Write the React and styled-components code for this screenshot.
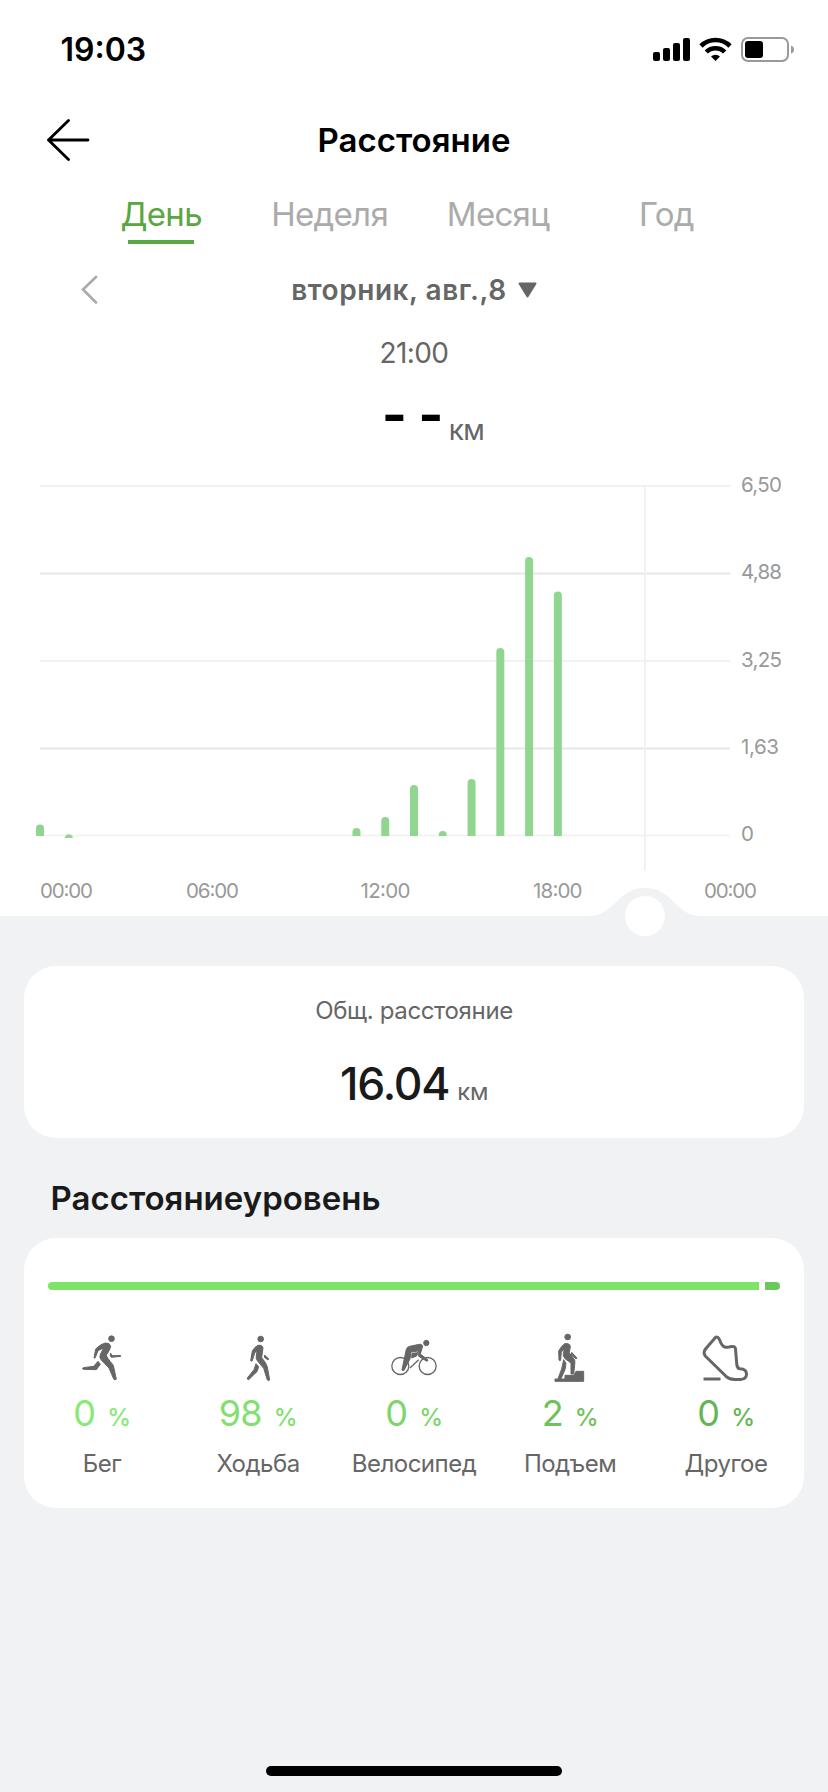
import React from "react";
import styled, { createGlobalStyle } from "styled-components";

const Global = createGlobalStyle`
  * { box-sizing: border-box; }
  body { margin: 0; background: #f0f2f4; font-family: Inter, "Liberation Sans", sans-serif; }
`;

const Screen = styled.main`
  width: 828px;
  height: 1792px;
  display: flex;
  flex-direction: column;
  background: #f0f2f4;
  overflow: hidden;
`;

const Top = styled.section`
  height: 916px;
  flex: none;
  display: flex;
  flex-direction: column;
  background: #fff;
  > * { flex-shrink: 0; }
`;

const Text = styled.span`
  font-size: ${(p) => p.$size}px;
  line-height: ${(p) => p.$lh || 40}px;
  font-weight: ${(p) => p.$weight || 400};
  color: ${(p) => p.$color || "#666"};
  letter-spacing: ${(p) => p.$ls || 0}px;
  white-space: pre;
`;

const Dashes = styled(Text)`
  padding-bottom: 5px;
  word-spacing: -1.5px;
`;

const StatusBar = styled.div`
  height: 100px;
  padding: 30px 34px 0 60.5px;
  display: flex;
  justify-content: space-between;
  align-items: flex-start;
`;

const StatusIconsWrap = styled.div`
  padding-top: 6px;
  display: flex;
`;

const TitleBar = styled.header`
  height: 80px;
  padding: 0 47px;
  display: grid;
  grid-template-columns: 44px 1fr 44px;
  align-items: center;
  justify-items: center;
`;

const Tabs = styled.nav`
  height: 70px;
  padding: 0 77px;
  display: grid;
  grid-template-columns: repeat(4, 168.4px);
`;

const Tab = styled.div`
  padding-top: 14px;
  display: flex;
  flex-direction: column;
  align-items: center;
  gap: 6px;
`;

const Underline = styled.div`
  width: 66px;
  height: 4px;
  background: #5aa641;
`;

const DateRow = styled.div`
  height: 80px;
  padding: 0 81px;
  display: grid;
  grid-template-columns: 17px 1fr 17px;
  align-items: center;
`;

const DateLabel = styled.div`
  display: flex;
  justify-content: center;
  align-items: center;
  gap: 11px;
`;

const Reading = styled.div`
  height: 130px;
  display: flex;
  flex-direction: column;
  align-items: center;
`;

const Value = styled.div`
  display: flex;
  align-items: baseline;
  justify-content: center;
  gap: ${(p) => p.$gap}px;
`;

const ReadingValue = styled(Value)`
  height: 74px;
  align-items: flex-end;
  padding-left: 38px;
`;

const ChartSvg = styled.svg`
  display: block;
  margin-bottom: -20px;
  text { font-family: Inter, "Liberation Sans", sans-serif; font-size: 20.5px; fill: #999; }
`;

const Body = styled.section`
  flex: 1;
  padding: 50px 24px 16px;
  display: flex;
  flex-direction: column;
`;

const Card = styled.div`
  height: ${(p) => p.$h}px;
  flex: none;
  border-radius: 32px;
  background: #fff;
  display: flex;
  flex-direction: column;
  align-items: center;
`;

const TotalCard = styled(Card)`
  padding-top: 25px;
  gap: 23px;
`;

const LevelCard = styled(Card)`
  padding-top: 44px;
`;

const Heading = styled.h2`
  margin: 0;
  height: 100px;
  padding: 40px 0 0 26.5px;
  display: flex;
`;

const Progress = styled.div`
  width: 732px;
  height: 8px;
  display: flex;
  gap: 6px;
  border-radius: 4px;
  overflow: hidden;
`;

const Segment = styled.div`
  flex: ${(p) => p.$share};
  background: ${(p) => p.$color};
`;

const Activities = styled.div`
  width: 780px;
  margin-top: 43px;
  display: grid;
  grid-template-columns: repeat(5, 156px);
`;

const Activity = styled.div`
  display: flex;
  flex-direction: column;
  align-items: center;
`;

const Home = styled.div`
  width: 296px;
  height: 10px;
  flex: none;
  margin: auto auto 0;
  border-radius: 5px;
  background: #000;
`;

const GRID = [
  ["6,50", 486, 41, "#f0f1f2"],
  ["4,88", 573.5, 41, "#e6e7e8"],
  ["3,25", 661, 41, "#f0f1f2"],
  ["1,63", 748.5, 38, "#e6e7e8"],
  ["0", 835.5, 11, "#f2f3f4"],
];
const HOURS = [
  ["00:00", 40, 53],
  ["06:00", 186, 53],
  ["12:00", 360.5, 50],
  ["18:00", 533, 49.5],
  ["00:00", 704, 53],
];
const BARS = [
  [0, 824.5], [11, 828], [12, 817], [13, 785], [14, 831],
  [15, 779], [16, 648], [17, 557], [18, 591.5],
];

function Chart() {
  return (
    <ChartSvg width="828" height="476" viewBox="0 460 828 476">
      {GRID.map(([label, y, w, c]) => (
        <g key={label}>
          <line x1="40" x2="730" y1={y} y2={y} stroke={c} strokeWidth="2" />
          <text x="741" y={y + 5.5} textLength={w}>{label}</text>
        </g>
      ))}
      <line x1="645" x2="645" y1="486" y2="871" stroke="#eff1f2" strokeWidth="2" />
      {BARS.map(([h, y]) => {
        const x = 40 + h * 28.77 - 4;
        return (
          <path key={h} d={`M${x} 836V${y + 4}a4 4 0 0 1 8 0V836z`} fill="#90d690" />
        );
      })}
      <path d="M64.8 838c0-5 8-5 8 0z" fill="#90d690" />
      {HOURS.map(([t, x, w]) => (
        <text key={x} x={x} y="898" textLength={w}>{t}</text>
      ))}
      <path
        d="M0 916H588C616 916 616 888 645 888S674 916 702 916H828V936H0z"
        fill="#f0f2f4"
      />
      <circle cx="645" cy="916" r="20" fill="#fff" />
    </ChartSvg>
  );
}

function StatusIcons() {
  return (
    <svg width="142" height="26" viewBox="652 36 142 26">
      <rect x="653" y="52" width="7" height="9" rx="2" />
      <rect x="663" y="48" width="7" height="13" rx="2" />
      <rect x="673" y="43" width="7" height="18" rx="2" />
      <rect x="683" y="38" width="7" height="23" rx="2" />
      <g fill="none" stroke="#000" strokeWidth="4.6">
        <path d="M701 46a20.5 20.5 0 0 1 29 0" />
        <path d="M706.3 52a13 13 0 0 1 18.4 0" />
      </g>
      <path d="M711 56.5a7 7 0 0 1 9 0L715.500 61z" />
      <rect x="742" y="38" width="46" height="23" rx="6" fill="#fff" stroke="#999" strokeWidth="2" />
      <rect x="745" y="41" width="18" height="17" rx="3" />
      <path d="M791 45.500q3 1 3 4t-3 4z" fill="#999" />
    </svg>
  );
}

const solid = { fill: "#666", stroke: "#666", strokeWidth: 3, strokeLinejoin: "round" };

const ICONS = {
  run: (
    <g transform="translate(70 1325) scale(.33333)" {...solid}>
      <circle cx="124.500" cy="41" r="8.500" />
      <path d="M72 98L77 72Q92 57 106 54Q120 53 122 64Q121 74 109 90Q110 97 130 121L139 163Q135 166 131 162L117 129L93 104Q87 97 91 88L101 69L84 77L76 98Q74 101 72 98z" />
      <path d="M122 85L127 92L152 91.500L152 94L124 97Q118 93 122 85z" />
      <path d="M84 109L91 118L79 134L40 133Q35 131 40 128L71 124z" />
    </g>
  ),
  walk: (
    <g transform="translate(60 1320) scale(.33333)" {...solid}>
      <circle cx="602" cy="57" r="8.500" />
      <path d="M572 122L577 93Q585 79 594 76Q608 74 609 84L605 113Q619 129 622 141L629 180Q626 184 622 180L611 145L592 122Q587 116 589 108L591 92L584 99L577 122Q574 125 572 122z" />
      <path d="M614 105L626 117L624 120L613 112z" />
      <path d="M588 131L596 140L591 155L566 179Q561 179 562 174L582 149z" />
    </g>
  ),
  bike: (
    <g transform="translate(330 1320) scale(.33333)" {...solid}>
      <g fill="none" strokeWidth="4">
        <circle cx="211" cy="138" r="25.500" />
        <circle cx="293" cy="138" r="25.500" />
        <path d="M240 144L266 119" />
      </g>
      <circle cx="289" cy="69" r="8" />
      <path d="M229 88Q231 81 239 79L268 73Q279 72 277 82L271 102L294 120Q293 125 289 123L266 109L266 93L243 96L240 117L222 151Q217 154 216 149z" />
      <path d="M246 100L264 98L260 108L245 114z" />
    </g>
  ),
  climb: (
    <g transform="translate(330 1320) scale(.33333)" {...solid}>
      <circle cx="713" cy="51" r="8.500" />
      <path d="M687 120L686 93Q695 77 704 71Q720 69 721 80L718 98L734 120Q736 124 731 162L723 162L723 129L705 116Q698 109 700 101L703 87L694 96L692 121Q689 124 687 120z" />
      <path d="M725 97L741 114L738 117L724 104z" />
      <path d="M701 119L708 130L705 149L693 176L684 176L695 147z" />
      <path d="M675 177L705 177L705 166L732 166L738 154L761 154L761 184L675 184z" />
    </g>
  ),
  shoe: (
    <g fill="none" stroke="#666" strokeWidth="3" strokeLinejoin="round">
      <path d="M715 1338q1.800-2 3.500 0c2 2 2 8 6.300 9q3 .8 5.500-.3 5-1.200 5.200 2.300l1.300 15.500q.4 4 3.200 4.300 6.800.4 6.500 5.700-.3 4.700-6 5h-6q-5 0-8.500-3.200l-20.500-20q-2.800-3.500 0-7.300z" />
      <path d="M703.500 1379h17" />
    </g>
  ),
};

const ITEMS = [
  ["run", "0", "Бег", "#88e977", 102],
  ["walk", "98", "Ходьба", "#82df70", 258],
  ["bike", "0", "Велосипед", "#7cd66b", 414],
  ["climb", "2", "Подъем", "#6dc25c", 570],
  ["shoe", "0", "Другое", "#63b654", 726],
];

const TABS = ["День", "Неделя", "Месяц", "Год"];

export default function App() {
  return (
    <Screen>
      <Global />
      <Top>
        <StatusBar>
          <Text $size={32} $weight={600} $color="#000">19:03</Text>
          <StatusIconsWrap><StatusIcons /></StatusIconsWrap>
        </StatusBar>
        <TitleBar>
          <svg width="44" height="44" viewBox="0 0 44 44" fill="none" stroke="#000" strokeWidth="2.8" strokeLinecap="round" strokeLinejoin="round">
            <path d="M21.500 2.500L1.500 22L21.500 41.500M1.500 22H41" />
          </svg>
          <Text $size={33} $weight={600} $color="#000">Расстояние</Text>
        </TitleBar>
        <Tabs>
          {TABS.map((tab, i) => (
            <Tab key={tab}>
              <Text $size={33} $ls={-0.7} $color={i === 0 ? "#5aa641" : "#ababab"}>{tab}</Text>
              {i === 0 && <Underline />}
            </Tab>
          ))}
        </Tabs>
        <DateRow>
          <svg width="17" height="30" viewBox="0 0 17 30" fill="none" stroke="#aaa" strokeWidth="2.600" strokeLinecap="round">
            <path d="M15 2L2 14.500L15 27.500" />
          </svg>
          <DateLabel>
            <Text $size={28} $weight={600} $ls={0.55}>вторник, авг.,8</Text>
            <svg width="19" height="16" viewBox="0 0 19 16" fill="#666" stroke="#666" strokeWidth="2" strokeLinejoin="round">
              <path d="M1.500 1.500h16l-8 13z" />
            </svg>
          </DateLabel>
        </DateRow>
        <Reading>
          <Text $size={28} $lh={46} $ls={-0.6}>21:00</Text>
          <ReadingValue $gap={5}>
            <Dashes $size={54} $weight={700} $color="#000" $lh={60}>- -</Dashes>
            <Text $size={28} $ls={-0.6}>км</Text>
          </ReadingValue>
        </Reading>
        <Chart />
      </Top>
      <Body>
        <TotalCard $h={172}>
          <Text $size={24} $ls={-0.35}>Общ. расстояние</Text>
          <Value $gap={8}>
            <Text $size={44.5} $weight={500} $color="#1a1a1a" $lh={60} $ls={-1.2}>16.04</Text>
            <Text $size={24} $ls={-0.4}>км</Text>
          </Value>
        </TotalCard>
        <Heading>
          <Text $size={33} $weight={600} $color="#1a1a1a">Расстояниеуровень</Text>
        </Heading>
        <LevelCard $h={270}>
          <Progress>
            <Segment $share={711} $color="#7de467" />
            <Segment $share={15} $color="#6bc95c" />
          </Progress>
          <Activities>
            {ITEMS.map(([icon, value, label, color, cx]) => (
              <Activity key={icon}>
                <svg width="48" height="50" viewBox={`${cx - 24} 1333 48 50`}>{ICONS[icon]}</svg>
                <Value $gap={12}>
                  <Text $size={36} $color={color} $lh={61} $ls={-0.8}>{value}</Text>
                  <Text $size={24} $weight={500} $color={color} $ls={-0.4}>%</Text>
                </Value>
                <Text $size={24} $ls={-0.5}>{label}</Text>
              </Activity>
            ))}
          </Activities>
        </LevelCard>
        <Home />
      </Body>
    </Screen>
  );
}
